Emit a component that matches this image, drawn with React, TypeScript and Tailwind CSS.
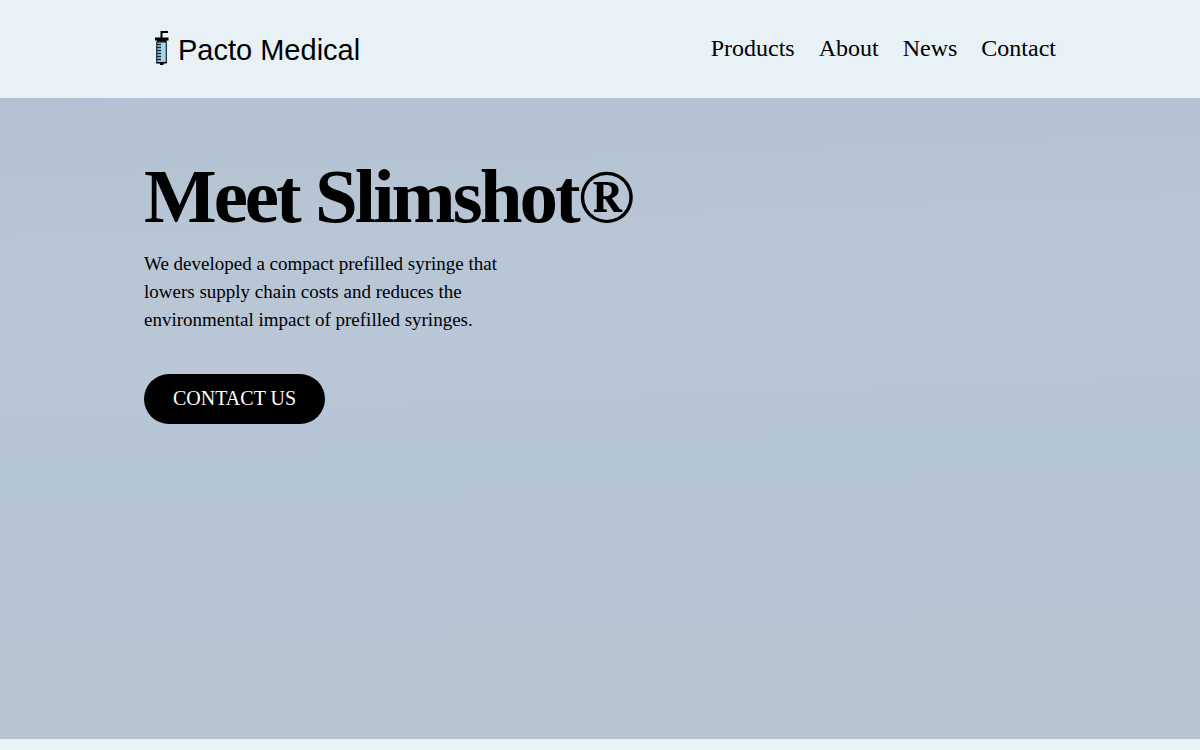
interface NavItem {
  label: string;
  href: string;
}

const navItems: NavItem[] = [
  { label: "Products", href: "#products" },
  { label: "About", href: "#about" },
  { label: "News", href: "#news" },
  { label: "Contact", href: "#contact" },
];

const SyringeIcon = () => (
  <svg width="16" height="36" viewBox="0 0 16 36" aria-hidden="true">
    <path d="M7.5 9V2H14" fill="none" stroke="#000" strokeWidth="2" />
    <path d="M1 7.5H14.5V10.5H12.5V12H3V10.5H1Z" fill="#000" />
    <rect x="2.7" y="12" width="9.6" height="20.5" fill="#a3d6f0" stroke="#1b2a33" strokeWidth="1.2" />
    <path d="M3 14.5H7M3 17.5H7M3 20.5H7M3 23.5H7M3 26.5H7M3 29.5H7" stroke="#16242c" strokeWidth="1.3" />
    <path d="M2.5 32H12.5V33.5H9.5V35H6V33.5H2.5Z" fill="#000" />
  </svg>
);

const Header = () => (
  <header className="flex h-[98px] items-center justify-between bg-[#e8f1f6] px-[12%] pb-0.5">
    <a href="#home" className="flex items-center gap-2 pl-[10px]">
      <SyringeIcon />
      <span className="pt-1 font-['Liberation_Sans',sans-serif] text-[29px] leading-9">Pacto Medical</span>
    </a>
    <nav className="flex gap-6">
      {navItems.map((item) => (
        <a key={item.label} href={item.href} className="text-2xl">
          {item.label}
        </a>
      ))}
    </nav>
  </header>
);

const Hero = () => (
  <section className="bg-[linear-gradient(178deg,#b2c0d5_0%,#b3c3d3_3%,#b7c5d4_20%,#b9c7d7_42%,#b3c4d4_56%,#b7c5d5_72%,#b6c4d1_88%,#b6c4d0_100%)] px-[12%] pt-[58px] pb-[315px]">
    <h1 className="text-[77px] leading-20 font-bold tracking-[-3px]">Meet Slimshot®</h1>
    <p className="mt-[14px] max-w-[400px] text-[19px] leading-7">
      We developed a compact prefilled syringe that lowers supply chain costs and reduces the
      environmental impact of prefilled syringes.
    </p>
    <button type="button" className="mt-10 h-[50px] rounded-full bg-black px-[29px] pb-0.5 text-xl text-white">
      CONTACT US
    </button>
  </section>
);

const App = () => {
  return (
    <div className="min-h-screen bg-[#e8f1f6] font-['Liberation_Serif',serif] text-black">
      <Header />
      <Hero />
    </div>
  );
};

export default App;
